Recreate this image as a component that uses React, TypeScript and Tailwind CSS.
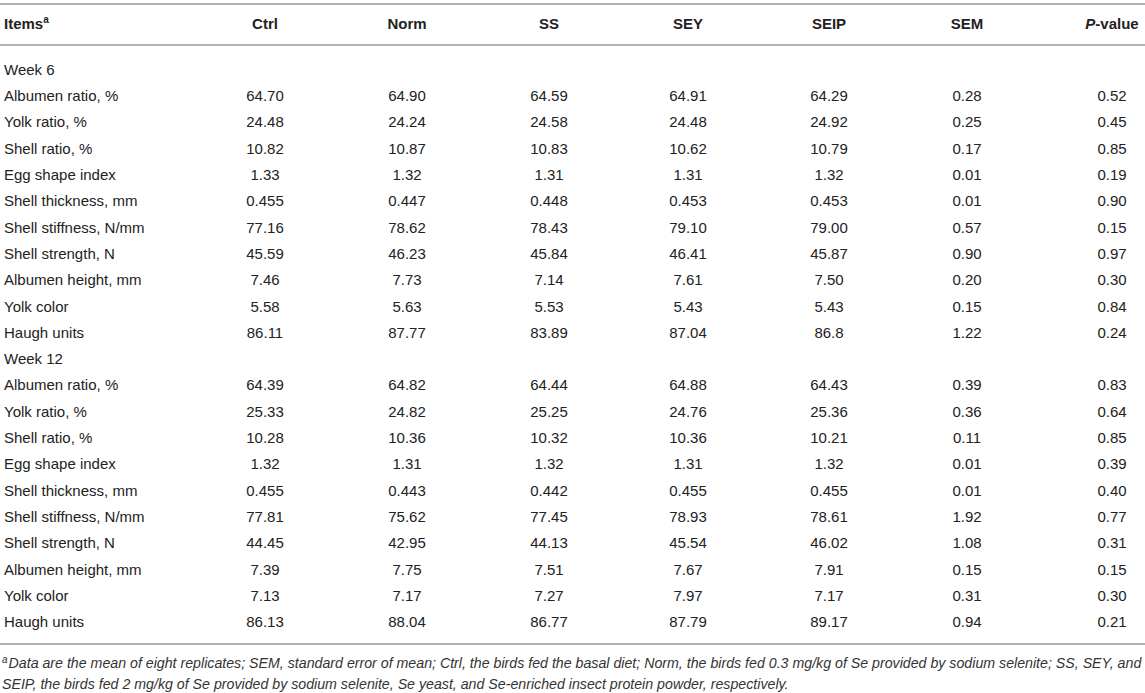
const week6 = [
  ["Albumen ratio, %", "64.70", "64.90", "64.59", "64.91", "64.29", "0.28", "0.52"],
  ["Yolk ratio, %", "24.48", "24.24", "24.58", "24.48", "24.92", "0.25", "0.45"],
  ["Shell ratio, %", "10.82", "10.87", "10.83", "10.62", "10.79", "0.17", "0.85"],
  ["Egg shape index", "1.33", "1.32", "1.31", "1.31", "1.32", "0.01", "0.19"],
  ["Shell thickness, mm", "0.455", "0.447", "0.448", "0.453", "0.453", "0.01", "0.90"],
  ["Shell stiffness, N/mm", "77.16", "78.62", "78.43", "79.10", "79.00", "0.57", "0.15"],
  ["Shell strength, N", "45.59", "46.23", "45.84", "46.41", "45.87", "0.90", "0.97"],
  ["Albumen height, mm", "7.46", "7.73", "7.14", "7.61", "7.50", "0.20", "0.30"],
  ["Yolk color", "5.58", "5.63", "5.53", "5.43", "5.43", "0.15", "0.84"],
  ["Haugh units", "86.11", "87.77", "83.89", "87.04", "86.8", "1.22", "0.24"],
];

const week12 = [
  ["Albumen ratio, %", "64.39", "64.82", "64.44", "64.88", "64.43", "0.39", "0.83"],
  ["Yolk ratio, %", "25.33", "24.82", "25.25", "24.76", "25.36", "0.36", "0.64"],
  ["Shell ratio, %", "10.28", "10.36", "10.32", "10.36", "10.21", "0.11", "0.85"],
  ["Egg shape index", "1.32", "1.31", "1.32", "1.31", "1.32", "0.01", "0.39"],
  ["Shell thickness, mm", "0.455", "0.443", "0.442", "0.455", "0.455", "0.01", "0.40"],
  ["Shell stiffness, N/mm", "77.81", "75.62", "77.45", "78.93", "78.61", "1.92", "0.77"],
  ["Shell strength, N", "44.45", "42.95", "44.13", "45.54", "46.02", "1.08", "0.31"],
  ["Albumen height, mm", "7.39", "7.75", "7.51", "7.67", "7.91", "0.15", "0.15"],
  ["Yolk color", "7.13", "7.17", "7.27", "7.97", "7.17", "0.31", "0.30"],
  ["Haugh units", "86.13", "88.04", "86.77", "87.79", "89.17", "0.94", "0.21"],
];

const heads = ["Ctrl", "Norm", "SS", "SEY", "SEIP", "SEM"];

function Row({ cells }: { cells: string[] }) {
  return (
    <tr className="h-[26.3px]">
      {cells.map((c, i) => (
        <td key={i} className={i === 0 ? "pl-[4px] text-left" : i === 7 ? "pl-[46px] text-center" : "text-center"}>
          {c}
        </td>
      ))}
    </tr>
  );
}

function Section({ title, rows }: { title: string; rows: string[][] }) {
  return (
    <>
      <tr className="h-[26.3px]">
        <td className="pl-[4px]" colSpan={8}>{title}</td>
      </tr>
      {rows.map((r, i) => (
        <Row key={i} cells={r} />
      ))}
    </>
  );
}

export default function App() {
  return (
    <div className="w-[1145px] h-[693px] bg-white text-[#222] overflow-hidden" style={{ fontFamily: '"Liberation Sans", Arial, sans-serif' }}>
      <table className="w-full table-fixed border-collapse text-[15px] mt-[3px]">
        <colgroup>
          <col className="w-[195px]" />
          <col className="w-[140px]" />
          <col className="w-[144px]" />
          <col className="w-[140px]" />
          <col className="w-[138px]" />
          <col className="w-[144px]" />
          <col className="w-[132px]" />
          <col />
        </colgroup>
        <thead>
          <tr className="h-[41px] border-t-2 border-b-2 border-[#b3b3b3] font-bold">
            <th className="pl-[4px] text-left font-bold">
              Items<span className="relative -top-[6px] text-[10px] font-bold">a</span>
            </th>
            {heads.map((h) => (
              <th key={h} className="text-center font-bold">{h}</th>
            ))}
            <th className="pl-[46px] text-center font-bold">
              <i>P</i>-value
            </th>
          </tr>
        </thead>
        <tbody>
          <tr className="h-[12px]"><td colSpan={8}></td></tr>
          <Section title="Week 6" rows={week6} />
          <Section title="Week 12" rows={week12} />
          <tr className="h-[8px] border-b-2 border-[#b3b3b3]"><td colSpan={8}></td></tr>
        </tbody>
      </table>
      <p className="italic text-[14.2px] leading-[21px] pt-[8px] pl-[2px] pr-[2px] text-[#333]">
        <span className="align-[5px] leading-none mr-[1px] text-[10px]">a</span>Data are the mean of eight replicates; SEM, standard error of mean; Ctrl, the birds fed the basal diet; Norm, the birds fed 0.3 mg/kg of Se provided by sodium selenite; SS, SEY, and SEIP, the birds fed 2 mg/kg of Se provided by sodium selenite, Se yeast, and Se-enriched insect protein powder, respectively.
      </p>
    </div>
  );
}
